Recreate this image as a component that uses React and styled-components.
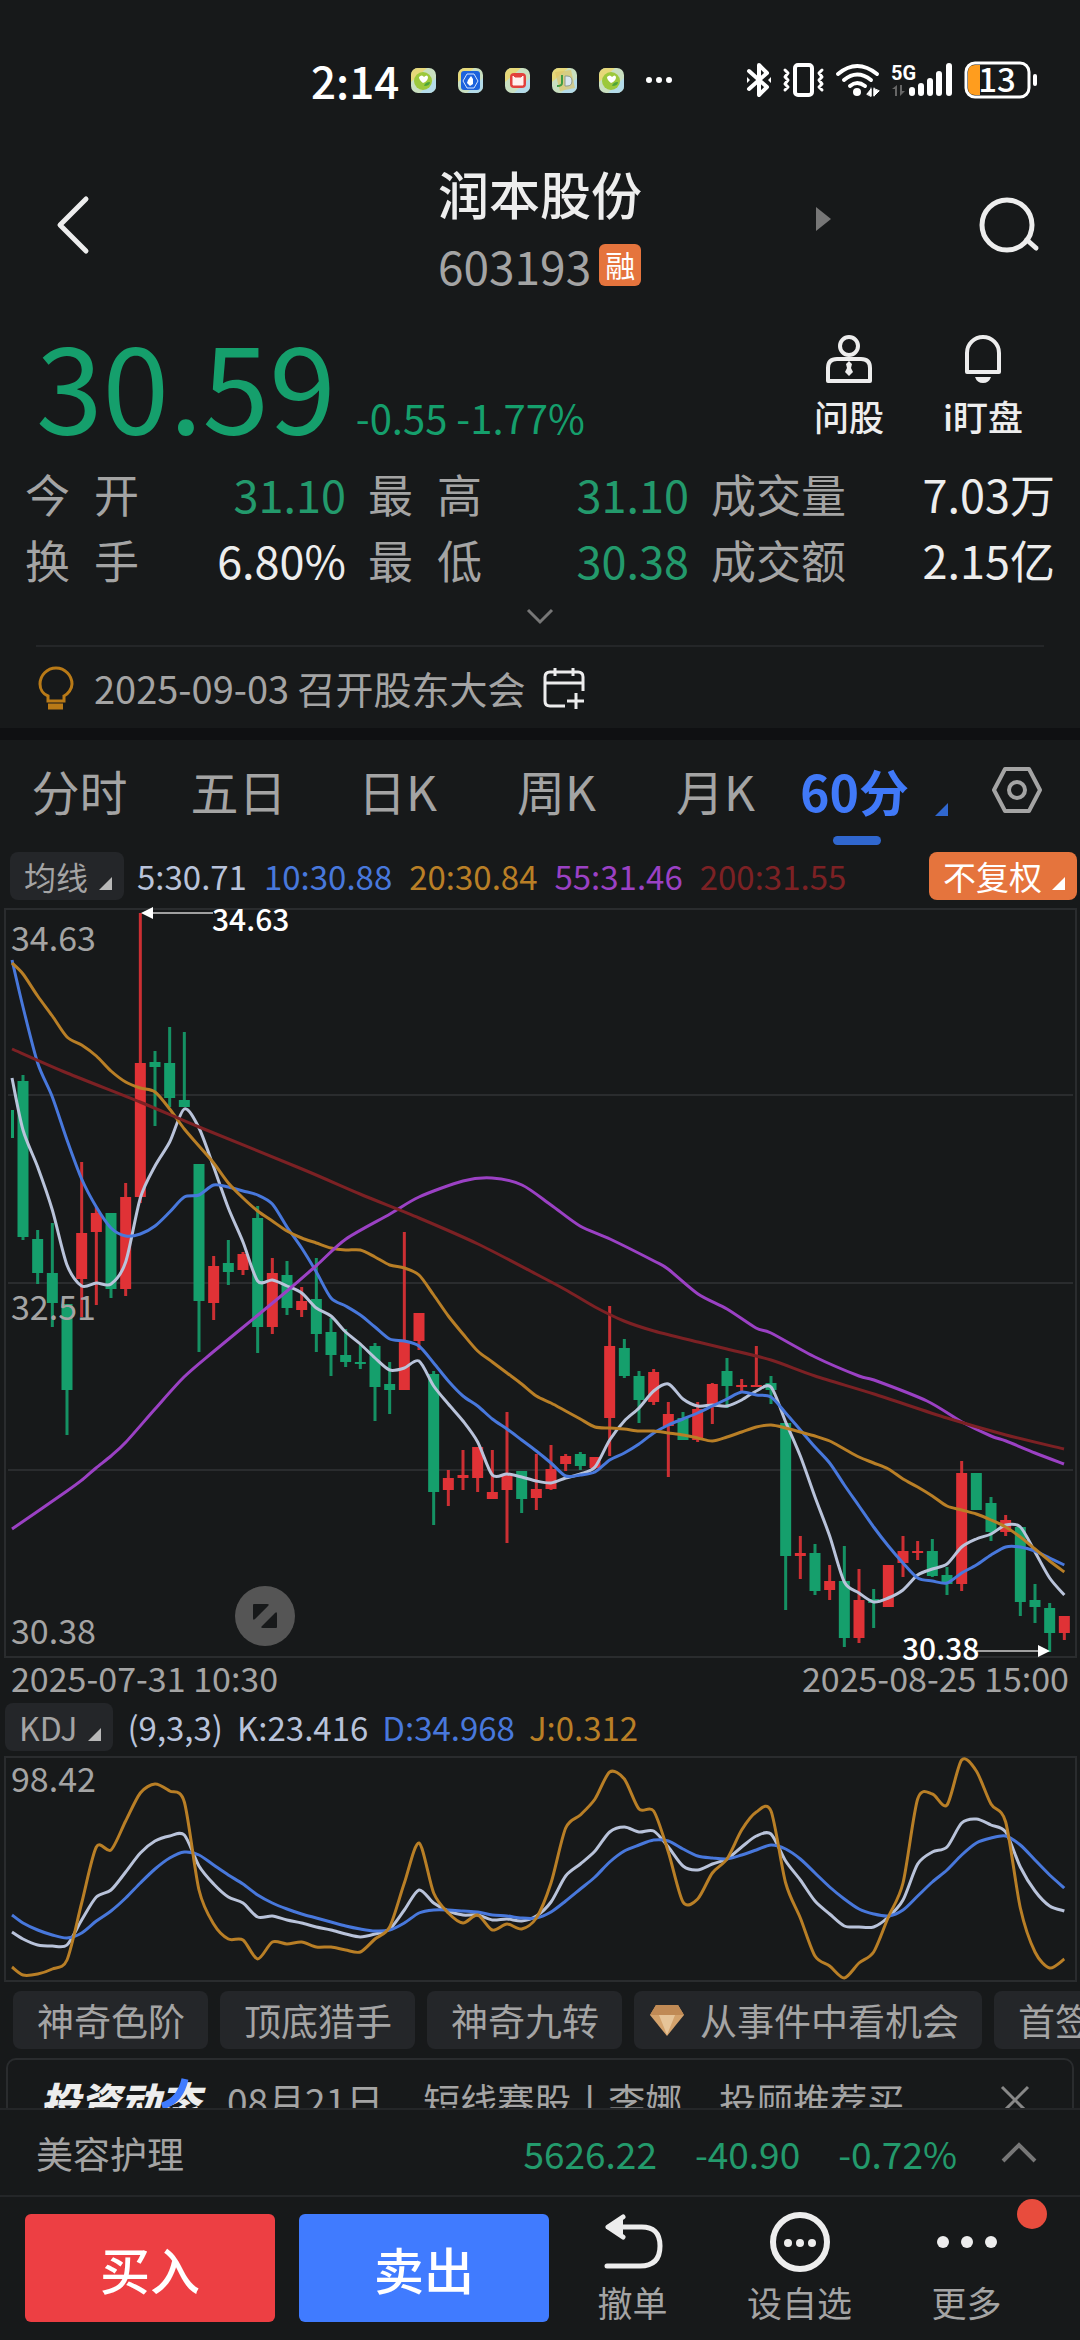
import React from 'react';
import styled, { createGlobalStyle } from 'styled-components';

const RED = '#e03236';
const GREEN = '#159f6c';
const LINE_COLORS = {
  white: '#b9c3da',
  blue: '#4878dc',
  orange: '#b97f26',
  purple: '#9b41c4',
  darkRed: '#7c2124',
};

const GlobalStyle = createGlobalStyle`
  * {
    box-sizing: border-box;
  }
  body {
    margin: 0;
    background: #17191a;
    color: #ededed;
    font-family: "Noto Sans CJK SC", "Noto Sans", sans-serif;
  }
  button {
    margin: 0;
    padding: 0;
    border: 0;
    background: none;
    color: inherit;
    font: inherit;
  }
  svg {
    display: block;
    flex: none;
    overflow: visible;
  }
`;

const Page = styled.div`
  overflow: hidden;
  white-space: nowrap;
`;

/* status bar */

const StatusBar = styled.div`
  display: flex;
  align-items: center;
  justify-content: space-between;
  height: 120px;
  padding: 40px 42px 0 311px;
  color: #fff;
`;

const StatusGroup = styled.div`
  display: flex;
  align-items: center;
  gap: ${(props) => props.$gap}px;
`;

const Clock = styled.span`
  margin-right: -10px;
  font-size: 44px;
  font-weight: 500;
  line-height: 48px;
`;

/* header */

const Header = styled.header`
  display: grid;
  grid-template-columns: 1fr auto 1fr;
  padding: 37px 0 9px;
`;

const HeaderSide = styled.div`
  display: flex;
  align-items: center;
  justify-content: ${(props) => (props.$right ? 'space-between' : 'flex-start')};
  padding: ${(props) => (props.$right ? '0 40px 8px 174px' : '0 0 8px 55px')};
`;

const Title = styled.h1`
  margin: 0;
  font-size: 51px;
  font-weight: 500;
  line-height: 72px;
`;

const Code = styled.div`
  display: flex;
  align-items: center;
  gap: 8px;
  height: 72px;
  font-size: 46px;
  color: #a4a4a4;
`;

const Badge = styled.span`
  width: 42px;
  height: 42px;
  border-radius: 6px;
  background: #e5743d;
  color: #fff;
  font-size: 30px;
  line-height: 40px;
  text-align: center;
`;

/* quote */

const Quote = styled.section`
  display: flex;
  justify-content: space-between;
  height: 151px;
  padding: 12px 30px 0 36px;
`;

const Price = styled.div`
  display: flex;
  align-items: baseline;
  gap: 20px;
  color: ${GREEN};
  font-size: 40px;
  line-height: 48px;

  strong {
    font-size: 120px;
    font-weight: 400;
    line-height: 120px;
  }
`;

const Tools = styled.div`
  display: flex;
  padding-top: 13px;
`;

const Tool = styled.button`
  display: flex;
  flex-direction: column;
  align-items: center;
  gap: 11px;
  width: 134px;
  font-size: 35px;
  font-weight: 500;
  line-height: 44px;
`;

const Stats = styled.dl`
  display: grid;
  grid-template-columns: 14fr 14fr 15fr;
  column-gap: 22px;
  margin: 0;
  padding: 0 25px;
`;

const Stat = styled.div`
  display: flex;
  justify-content: space-between;
  font-size: 45px;
  line-height: 66px;

  dt {
    display: flex;
    justify-content: space-between;
    min-width: 114px;
    color: #a4a4a4;
  }
  dd {
    margin: 0;
    color: ${(props) => (props.$down ? '#239a6c' : '#ededed')};
  }
`;

const Expand = styled.button`
  display: flex;
  align-items: center;
  justify-content: center;
  width: 100%;
  height: 48px;
`;

const Event = styled.div`
  display: flex;
  align-items: center;
  height: 83px;
  margin: 4px 36px 0;
  border-top: 2px solid #242628;
  color: #a4a4a4;
  font-size: 38px;

  span {
    margin: 0 17px 0 20px;
  }
`;

const Band = styled.div`
  height: 12px;
  background: #0f1012;
`;

/* period tabs */

const Tabs = styled.nav`
  display: grid;
  grid-template-columns: repeat(6, 159fr) 126fr;
`;

const Tab = styled.button`
  position: relative;
  height: 105px;
  padding-bottom: 5px;
  color: ${(props) => (props.$active ? '#4079f8' : '#a4a4a4')};
  font-size: ${(props) => (props.$active ? 50 : 48)}px;
  font-weight: ${(props) => (props.$active ? 700 : 400)};
`;

const ActiveTab = styled(Tab)`
  display: flex;
  align-items: center;
  gap: 26px;
  padding-left: 5px;

  svg {
    margin-top: 38px;
  }
  &::after {
    content: '';
    position: absolute;
    bottom: 0;
    left: 38px;
    width: 48px;
    height: 9px;
    border-radius: 5px;
    background: #3067cf;
  }
`;

const SettingsTab = styled(Tab)`
  display: flex;
  align-items: center;
  padding-left: 37px;
`;

/* indicators */

const IndicatorRow = styled.div`
  display: flex;
  align-items: center;
  gap: ${(props) => props.$gap}px;
  height: 48px;
  margin-top: ${(props) => props.$top}px;
  padding: 0 3px 0 ${(props) => props.$left}px;
  font-size: 33px;
`;

const Selector = styled.button`
  display: flex;
  align-items: center;
  gap: 11px;
  height: 48px;
  margin-right: ${(props) => (props.$tight ? -4 : 0)}px;
  padding: 0 12px 0 14px;
  border-radius: 8px;
  background: #242629;
  color: #a4a4a4;
  font-size: 32px;

  svg {
    margin-top: 14px;
  }
`;

const AdjustButton = styled(Selector)`
  gap: 10px;
  margin: 0 0 0 auto;
  background: #e5743d;
  color: #fff;
  font-size: 33px;
`;

const Reading = styled.span`
  color: ${(props) => props.$color};
`;

const ChartBox = styled.div`
  position: relative;

  > svg {
    width: 100%;
    height: auto;
  }
  text {
    font-size: 34px;
    fill: #a4a4a4;
  }
  .mark {
    font-size: 30px;
    font-weight: 500;
    fill: #fff;
  }
`;

const FullscreenButton = styled.button`
  position: absolute;
  left: 235px;
  bottom: 12px;
  width: 60px;
  height: 60px;
  display: grid;
  place-items: center;
  border-radius: 50%;
  background: #555;
`;

const Dates = styled.div`
  display: flex;
  justify-content: space-between;
  padding: 0 11px;
  color: #a4a4a4;
  font-size: 34px;
  line-height: 40px;
`;

/* chips and news */

const Chips = styled.div`
  display: flex;
  gap: 12px;
  margin-top: 9px;
  padding-left: 13px;
`;

const Chip = styled.button`
  display: flex;
  align-items: center;
  flex: none;
  gap: 16px;
  height: 58px;
  padding: 0 23px 0 ${(props) => (props.$icon ? 16 : 24)}px;
  border-radius: 8px;
  background: #242629;
  color: #a4a4a4;
  font-size: 37px;
`;

/* the card slides under the index bar */
const NewsPeek = styled.div`
  height: 50px;
  margin-top: 9px;
  padding: 0 6px;
  overflow: hidden;
`;

const NewsCard = styled.div`
  display: flex;
  align-items: center;
  height: 84px;
  padding: 0 42px 0 32px;
  border: 2px solid #2a2c2e;
  border-radius: 10px;
  color: #a4a4a4;
  font-size: 37px;
`;

const NewsLogo = styled.strong`
  position: relative;
  margin-right: 27px;
  color: #ededed;
  font-size: 40px;
  font-style: italic;
  font-weight: 900;

  svg {
    position: absolute;
    right: 12px;
    top: 8px;
  }
`;

const NewsDate = styled.span`
  margin-right: 40px;
`;

const Close = styled.button`
  margin-left: auto;
`;

const IndexBar = styled.div`
  display: flex;
  align-items: center;
  gap: 38px;
  height: 87px;
  padding: 0 43px 0 36px;
  border-top: 2px solid #242628;
  color: #239a6c;
  font-size: 37px;
`;

const IndexName = styled.span`
  margin-right: auto;
  color: #a4a4a4;
`;

const IndexToggle = styled.button`
  margin-left: 6px;
`;

/* trade bar */

const TradeBar = styled.footer`
  display: flex;
  height: 145px;
  padding: 17px 30px 18px 25px;
  border-top: 2px solid #242628;
`;

const TradeButton = styled.button`
  flex: 250 1 0;
  height: 108px;
  margin-right: ${(props) => (props.$side === 'buy' ? 24 : 0)}px;
  border-radius: 6px;
  background: ${(props) => (props.$side === 'buy' ? '#ed3f43' : '#407bff')};
  color: #fff;
  font-size: 50px;
  font-weight: 500;
`;

const Action = styled.button`
  position: relative;
  flex: 167 1 0;
  display: flex;
  flex-direction: column;
  align-items: center;
  justify-content: flex-end;
  color: #a4a4a4;
  font-size: 35px;
  line-height: 40px;

  svg {
    margin-bottom: 10px;
  }
`;

const Dot = styled.i`
  position: absolute;
  right: 3px;
  top: -15px;
  width: 30px;
  height: 30px;
  border-radius: 50%;
  background: #e84c3d;
`;

/* data: [high, bodyTop, bodyBottom, low, up] in chart units */

const CANDLES = [
  [175, 181, 337, 340, 0], [330, 339, 373, 384, 0], [323, 373, 403, 427, 0], [404, 404, 490, 535, 0],
  [262, 333, 379, 417, 1], [307, 313, 332, 405, 1], [313, 313, 389, 398, 0], [283, 297, 389, 396, 1],
  [13, 163, 297, 303, 1], [151, 162, 167, 226, 0], [127, 163, 198, 207, 0], [132, 200, 207, 207, 0],
  [264, 264, 401, 452, 0], [356, 366, 403, 420, 1], [340, 363, 372, 385, 0], [352, 354, 370, 375, 1],
  [306, 318, 427, 453, 0], [358, 373, 427, 434, 1], [361, 375, 408, 415, 0], [387, 401, 410, 417, 1],
  [358, 399, 434, 452, 0], [418, 432, 455, 476, 0], [429, 455, 462, 467, 0], [445, 462, 464, 469, 0],
  [443, 446, 487, 521, 0], [462, 484, 490, 514, 0], [332, 442, 490, 490, 1], [413, 413, 441, 450, 1],
  [471, 474, 592, 625, 0], [570, 578, 590, 606, 1], [550, 575, 578, 590, 1], [547, 547, 578, 592, 1],
  [550, 592, 599, 599, 1], [512, 574, 590, 643, 1], [571, 571, 599, 613, 0], [554, 589, 598, 610, 1],
  [545, 569, 589, 590, 1], [554, 556, 564, 571, 1], [552, 554, 566, 570, 0], [557, 557, 568, 569, 1],
  [406, 446, 518, 556, 1], [439, 448, 476, 478, 0], [471, 476, 500, 523, 0], [469, 472, 502, 505, 1],
  [502, 514, 526, 577, 1], [512, 518, 540, 540, 0], [502, 509, 540, 542, 1], [483, 484, 506, 524, 1],
  [458, 471, 486, 508, 0], [479, 485, 487, 491, 1], [446, 485, 487, 487, 1], [476, 483, 490, 504, 0],
  [523, 523, 656, 710, 0], [636, 653, 656, 679, 1], [644, 653, 691, 695, 0], [665, 681, 690, 700, 1],
  [646, 681, 738, 747, 0], [669, 700, 738, 743, 1], [689, 699, 703, 728, 0], [665, 665, 707, 707, 1],
  [636, 651, 663, 677, 1], [641, 651, 653, 660, 1], [639, 651, 676, 677, 0], [667, 675, 684, 695, 0],
  [561, 573, 684, 691, 1], [573, 573, 610, 610, 0], [597, 603, 632, 641, 0], [615, 620, 632, 636, 1],
  [627, 627, 702, 716, 0], [684, 700, 707, 723, 0], [703, 708, 733, 752, 0], [716, 716, 733, 740, 1],
];

const MA5 = [
  178, 230, 267, 310, 365, 386, 383, 384, 362, 298, 266, 242, 209, 228, 267, 308, 342, 381, 380, 386, 393, 408,
  416, 432, 444, 458, 470, 468, 461, 486, 504, 521, 542, 575, 574, 577, 581, 583, 578, 574, 567, 540, 521, 508,
  491, 484, 499, 506, 505, 506, 500, 491, 487, 522, 556, 597, 636, 682, 693, 702, 698, 690, 675, 669, 664, 647,
  639, 634, 625, 627, 652, 678, 695,
];

const MA10 = [
  60, 107, 163, 197, 240, 279, 307, 328, 336, 334, 326, 312, 297, 295, 285, 287, 291, 295, 304, 327, 348, 372,
  398, 406, 415, 427, 439, 441, 446, 463, 481, 496, 506, 519, 529, 540, 551, 563, 576, 575, 572, 560, 553, 544,
  533, 525, 519, 513, 506, 499, 492, 495, 497, 513, 530, 547, 563, 585, 606, 627, 646, 663, 678, 681, 683, 673,
  665, 655, 647, 647, 651, 658, 665,
];

const MA20 = [
  63, 74, 96, 116, 137, 145, 156, 171, 182, 188, 192, 209, 229, 246, 263, 283, 298, 311, 321, 331, 338, 343,
  348, 350, 350, 357, 365, 368, 375, 395, 416, 434, 451, 462, 473, 484, 496, 503, 511, 519, 527, 528, 529, 531,
  531, 533, 535, 538, 541, 537, 532, 527, 525, 528, 532, 536, 541, 549, 557, 563, 569, 579, 587, 596, 606, 610,
  614, 620, 627, 637, 649, 661, 672,
];

const MA55 = [
  [12, 629], [67, 591], [82, 580], [96, 568], [111, 556], [126, 542], [155, 509], [184, 477], [213, 452],
  [258, 415], [287, 391], [317, 365], [346, 339], [390, 314], [419, 297], [463, 281], [492, 278], [522, 285],
  [551, 305], [580, 326], [610, 339], [654, 361], [668, 369], [698, 394], [727, 409], [756, 428], [771, 433],
  [815, 457], [859, 476], [874, 480], [927, 501], [962, 522], [991, 536], [1006, 541], [1035, 553], [1064, 564],
];

const MA200 = [
  [12, 149], [67, 173], [140, 202], [199, 227], [302, 269], [360, 294], [419, 318], [478, 344], [536, 374],
  [566, 390], [595, 407], [624, 421], [654, 431], [698, 442], [727, 449], [771, 460], [815, 476], [874, 494],
  [947, 518], [1006, 535], [1064, 549],
];

const K_LINE = [
  182, 189, 195, 196, 195, 170, 147, 140, 122, 103, 91, 86, 85, 116, 134, 147, 153, 167, 166, 170, 173, 177,
  180, 184, 187, 184, 179, 160, 140, 153, 161, 165, 165, 170, 169, 171, 166, 152, 126, 114, 101, 82, 77, 82,
  81, 97, 116, 120, 114, 109, 97, 86, 84, 111, 130, 151, 164, 176, 177, 177, 167, 150, 114, 102, 97, 73, 69,
  75, 82, 117, 141, 156, 161,
];

const D_LINE = [
  165, 173, 180, 185, 188, 183, 171, 161, 148, 133, 119, 108, 102, 105, 115, 125, 134, 145, 153, 159, 164, 168,
  172, 176, 179, 181, 180, 173, 163, 160, 160, 161, 162, 165, 166, 168, 168, 162, 151, 139, 127, 112, 101, 95,
  90, 91, 99, 106, 108, 109, 105, 100, 95, 99, 109, 123, 137, 149, 159, 164, 166, 160, 146, 132, 120, 105, 93,
  88, 86, 95, 110, 125, 138,
];

const J_LINE = [
  217, 225, 224, 219, 210, 153, 97, 100, 71, 43, 34, 41, 52, 140, 174, 189, 190, 209, 192, 194, 192, 197, 197,
  200, 202, 189, 177, 133, 93, 143, 163, 173, 165, 180, 174, 179, 168, 133, 78, 65, 49, 22, 29, 59, 61, 102,
  152, 149, 123, 109, 80, 62, 61, 133, 168, 206, 216, 228, 213, 202, 167, 133, 49, 44, 55, 10, 21, 54, 72, 158,
  202, 218, 209,
];

const STATS = [
  { label: '今开', value: '31.10', down: true },
  { label: '最高', value: '31.10', down: true },
  { label: '成交量', value: '7.03万' },
  { label: '换手', value: '6.80%' },
  { label: '最低', value: '30.38', down: true },
  { label: '成交额', value: '2.15亿' },
];

const AVERAGES = [
  ['5:30.71', LINE_COLORS.white],
  ['10:30.88', LINE_COLORS.blue],
  ['20:30.84', LINE_COLORS.orange],
  ['55:31.46', LINE_COLORS.purple],
  ['200:31.55', LINE_COLORS.darkRed],
];

const candleX = (i) => 23 + (i * 44) / 3;

// the first value belongs to the left edge of the plot
const toPoints = (values) => values.map((y, i) => [i === 0 ? 12 : candleX(i - 1), y]);

const smoothPath = (points) => {
  const t = 0.14;
  return points.reduce((d, [x, y], i) => {
    if (i === 0) return `M${x} ${y}`;
    const [x1, y1] = points[i - 1];
    const [x0, y0] = points[i - 2] || points[i - 1];
    const [x3, y3] = points[i + 1] || points[i];
    const c1 = [x1 + (x - x0) * t, y1 + (y - y0) * t];
    const c2 = [x - (x3 - x1) * t, y - (y3 - y1) * t];
    return `${d}C${c1.join(' ')} ${c2.join(' ')} ${x} ${y}`;
  }, '');
};

const Line = ({ points, color }) => (
  <path d={smoothPath(points)} fill="none" stroke={color} strokeWidth="3" strokeLinejoin="round" />
);

const Corner = ({ color = '#b8b8b8' }) => (
  <svg width="13" height="13" viewBox="0 0 13 13"><path d="M13 0v13H0z" fill={color} /></svg>
);

const PriceChart = () => (
  <svg viewBox="0 0 1080 758" role="img" aria-label="60分K线图">
    <g fill="none" stroke="#2a2c2e" strokeWidth="2">
      <rect x="5" y="9" width="1071" height="748" />
      <path d="M8 195H1073M8 383H1073M8 570H1073" />
    </g>
    <rect x="11" y="210" width="3" height="28" fill={GREEN} />
    {CANDLES.map(([high, top, bottom, low, up], i) => (
      <g key={candleX(i)} fill={up ? RED : GREEN}>
        <rect x={candleX(i) - 1.5} y={high} width="3" height={low - high} opacity="0.9" />
        <rect x={candleX(i) - 5.5} y={top} width="11" height={bottom - top} />
      </g>
    ))}
    <Line points={toPoints(MA5)} color={LINE_COLORS.white} />
    <Line points={toPoints(MA10)} color={LINE_COLORS.blue} />
    <Line points={toPoints(MA20)} color={LINE_COLORS.orange} />
    <Line points={MA55} color={LINE_COLORS.purple} />
    <Line points={MA200} color={LINE_COLORS.darkRed} />
    <text x="11" y="51">34.63</text>
    <text x="11" y="420">32.51</text>
    <text x="11" y="744">30.38</text>
    <path d="M152 13H213M977 751H1040" stroke="#a0a0a0" strokeWidth="2" />
    <path d="M141 13l12-6v12zM1050 751l-12-6v12z" fill="#fff" />
    <text className="mark" x="212" y="31">34.63</text>
    <text className="mark" x="902" y="760">30.38</text>
  </svg>
);

const KdjChart = () => (
  <svg viewBox="0 1 1080 231" role="img" aria-label="KDJ">
    <rect x="5" y="7" width="1071" height="224" fill="none" stroke="#2a2c2e" strokeWidth="2" />
    <Line points={toPoints(K_LINE)} color={LINE_COLORS.white} />
    <Line points={toPoints(D_LINE)} color={LINE_COLORS.blue} />
    <Line points={toPoints(J_LINE)} color={LINE_COLORS.orange} />
    <text x="11" y="42">98.42</text>
  </svg>
);

/* launcher icons of the pending notifications */
const AppIcon = ({ kind }) => (
  <svg width="25" height="25" viewBox="0 0 25 25">
    <rect width="25" height="25" rx="7" fill="#c9dfc0" />
    <path d="M0 14V7a7 7 0 0 1 7-7h9z" fill="#e6d879" />
    <path d="M25 10v8a7 7 0 0 1-7 7H9z" fill="#b4dbe9" />
    {kind === 'leaf' && (
      <>
        <circle cx="12" cy="13" r="9" fill="#9cc83c" />
        <path d="M8 9q3-3 5 0 3-3 4 0 0 4-5 6-4-3-4-6z" fill="#fff" />
        <path d="M13 18q1-4 6-4 0 4-6 4z" fill="#4ca53a" />
      </>
    )}
    {kind === 'hand' && (
      <>
        <rect x="3" y="3" width="19" height="19" rx="3" fill="#1d62dd" />
        <path d="M9 6h7l4 7-4 7H9l-4-7z" fill="none" stroke="#d5e4ff" strokeWidth="1" />
        <path d="M10 12l3-4 2 3v5l-3 2-3-3z" fill="#fff" />
      </>
    )}
    {kind === 'red' && (
      <>
        <rect x="5" y="5" width="16" height="15" rx="4" fill="#e2403c" />
        <path d="M8 8l2 2h6l2-2v9H8z" fill="#fff0ee" stroke="#fff0ee" strokeLinejoin="round" />
      </>
    )}
    {kind === 'jd' && (
      <>
        <path d="M3 4l16-2 4 18-15 3z" fill="#dcc56a" opacity="0.7" />
        <path d="M10 7v8q0 3-5 3" fill="none" stroke="#3f9c44" strokeWidth="2" />
        <path d="M13 8h2q5 0 5 5t-5 5h-2z" fill="#d9e6ef" stroke="#8d9a8e" strokeWidth="1" />
      </>
    )}
  </svg>
);

const Status = () => (
  <StatusBar>
    <StatusGroup $gap={22}>
      <Clock>2:14</Clock>
      <AppIcon kind="leaf" />
      <AppIcon kind="hand" />
      <AppIcon kind="red" />
      <AppIcon kind="jd" />
      <AppIcon kind="leaf" />
      <svg width="26" height="8" viewBox="0 0 26 8" fill="#fff">
        <circle cx="3" cy="4" r="3" /><circle cx="13" cy="4" r="3" /><circle cx="23" cy="4" r="3" />
      </svg>
    </StatusGroup>
    <StatusGroup $gap={10}>
      <svg width="26" height="34" viewBox="0 0 26 34" fill="none" stroke="#fff" strokeWidth="4" strokeLinejoin="round" strokeLinecap="round">
        <path d="M3 8l18 16-8 8V2l8 8L3 26" />
        <path d="M1 14l3 3-3 3zM25 14l-3 3 3 3z" fill="#fff" stroke="none" />
      </svg>
      <svg width="43" height="34" viewBox="0 0 43 34" fill="none" stroke="#fff" strokeLinejoin="round" strokeLinecap="round">
        <rect x="13" y="2" width="17" height="30" rx="3" strokeWidth="4" />
        <path d="M3 7l3 3-3 4 3 3-3 4 3 3-3 3M40 7l-3 3 3 4-3 3 3 4-3 3 3 3" strokeWidth="3" />
      </svg>
      <svg width="46" height="34" viewBox="0 0 46 34" fill="none" stroke="#fff" strokeWidth="4" strokeLinecap="round">
        <path d="M3 11q19-16 39 0M9 17q13-11 27 0M15 23q7-6 15 0" />
        <circle cx="22" cy="29" r="4" fill="#fff" stroke="none" />
        <path d="M32 31l4-5v7zM39 26v7l5-5zM36 25v8M39 25v8" fill="#fff" stroke="#fff" strokeWidth="1" />
      </svg>
      <svg width="63" height="34" viewBox="0 0 63 34">
        <text x="0" y="17" fill="#fff" fontSize="20" fontWeight="700" fontFamily="Roboto">5G</text>
        <path d="M1 26l5-4v11H4v-7zM9 22v11l5-5h-3v-6z" fill="#666" />
        <path d="M21 27v3M30 23v7M39 18v12M48 11v19M58 3v27" stroke="#fff" strokeWidth="6" strokeLinecap="round" />
      </svg>
      <svg width="74" height="38" viewBox="0 0 74 38">
        <path d="M4 11q0-7 7-7h5v30h-5q-7 0-7-7z" fill="#ff9d1e" />
        <rect x="2" y="2" width="63" height="34" rx="9" fill="none" stroke="#fff" strokeWidth="3" />
        <rect x="69" y="13" width="4" height="12" rx="2" fill="#fff" />
        <text x="33" y="31" fill="#fff" fontSize="33" fontWeight="500" textAnchor="middle">13</text>
      </svg>
    </StatusGroup>
  </StatusBar>
);

const App = () => (
  <Page>
    <GlobalStyle />
    <Status />

    <Header>
      <HeaderSide>
        <button type="button" aria-label="返回">
          <svg width="36" height="60" viewBox="0 0 36 60" fill="none" stroke="#ededed" strokeWidth="5" strokeLinecap="round" strokeLinejoin="round">
            <path d="M31 4L5 30l26 26" />
          </svg>
        </button>
      </HeaderSide>
      <div>
        <Title>润本股份</Title>
        <Code>603193<Badge>融</Badge></Code>
      </div>
      <HeaderSide $right>
        <button type="button" aria-label="下一只">
          <svg width="16" height="36" viewBox="0 0 16 36"><path d="M0 0l15 12L0 24z" fill="#777" /></svg>
        </button>
        <button type="button" aria-label="搜索">
          <svg width="62" height="56" viewBox="0 0 62 56" fill="none" stroke="#ededed" strokeWidth="5" strokeLinecap="round">
            <circle cx="29" cy="28" r="25" />
            <path d="M49 43l9 8" />
          </svg>
        </button>
      </HeaderSide>
    </Header>

    <Quote>
      <Price>
        <strong>30.59</strong>
        <span>-0.55 -1.77%</span>
      </Price>
      <Tools>
        <Tool type="button">
          <svg width="48" height="48" viewBox="0 0 48 48" fill="none" stroke="#ededed" strokeWidth="4" strokeLinejoin="round">
            <circle cx="24" cy="11" r="9" />
            <path d="M3 46V33q0-9 9-9h24q9 0 9 9v13z" />
            <path d="M24 26l3 3-1 4 2 4-4 4-4-4 2-4-1-4z" fill="#ededed" stroke="none" />
          </svg>
          问股
        </Tool>
        <Tool type="button">
          <svg width="40" height="48" viewBox="0 0 40 48" fill="none" stroke="#ededed" strokeWidth="4" strokeLinejoin="round">
            <path d="M4 37V18a16 16 0 0 1 32 0v19z" />
            <path d="M12 42h16q-2 6-8 6t-8-6z" fill="#ededed" stroke="none" />
          </svg>
          i盯盘
        </Tool>
      </Tools>
    </Quote>

    <Stats>
      {STATS.map(({ label, value, down }) => (
        <Stat key={label} $down={down}>
          <dt>{label.length === 2 ? [...label].map((c) => <span key={c}>{c}</span>) : label}</dt>
          <dd>{value}</dd>
        </Stat>
      ))}
    </Stats>
    <Expand type="button" aria-label="展开">
      <svg width="28" height="16" viewBox="0 0 28 16" fill="none" stroke="#777" strokeWidth="3"><path d="M2 1l12 12L26 1" /></svg>
    </Expand>
    <Event>
      <svg width="38" height="44" viewBox="0 0 38 44" fill="none" stroke="#b97a17" strokeWidth="3">
        <path d="M12 35v-5C7 28 4 23 4 18a16 16 0 0 1 32 0c0 5-4 10-8 12v5zM12 39h15M12 42h15" />
      </svg>
      <span>2025-09-03 召开股东大会</span>
      <svg width="42" height="42" viewBox="0 0 42 42" fill="none" stroke="#ededed" strokeWidth="3">
        <path d="M22 39H7q-5 0-5-5V10q0-5 5-5h28q5 0 5 5v14M2 16h38M12 1v8M30 1v8M24 34h17M33 26v16" />
      </svg>
    </Event>
    <Band />

    <Tabs>
      <Tab type="button">分时</Tab>
      <Tab type="button">五日</Tab>
      <Tab type="button">日K</Tab>
      <Tab type="button">周K</Tab>
      <Tab type="button">月K</Tab>
      <ActiveTab type="button" $active>60分<Corner color="#3067cf" /></ActiveTab>
      <SettingsTab type="button" aria-label="设置">
        <svg width="52" height="48" viewBox="0 0 52 48" fill="none" stroke="#a4a4a4" strokeWidth="4" strokeLinejoin="round">
          <path d="M14 3h24l11 21-11 21H14L3 24z" />
          <circle cx="26" cy="24" r="8" />
        </svg>
      </SettingsTab>
    </Tabs>

    <IndicatorRow $top={7} $left={10} $gap={17}>
      <Selector type="button" $tight>均线<Corner /></Selector>
      {AVERAGES.map(([text, color]) => <Reading key={text} $color={color}>{text}</Reading>)}
      <AdjustButton type="button">不复权<Corner color="#fff" /></AdjustButton>
    </IndicatorRow>
    <ChartBox>
      <PriceChart />
      <FullscreenButton type="button" aria-label="全屏">
        <svg width="24" height="24" viewBox="0 0 24 24" fill="#17191a">
          <path d="M0 1q0-1 1-1h13q3 0 1 2L2 15q-2 2-2-1zM24 23q0 1-1 1H10q-3 0-1-2L22 9q2-2 2 1z" />
        </svg>
      </FullscreenButton>
    </ChartBox>
    <Dates>
      <span>2025-07-31 10:30</span>
      <span>2025-08-25 15:00</span>
    </Dates>

    <IndicatorRow $top={5} $left={5} $gap={14}>
      <Selector type="button">KDJ<Corner /></Selector>
      <Reading $color={LINE_COLORS.white}>(9,3,3)</Reading>
      <Reading $color={LINE_COLORS.white}>K:23.416</Reading>
      <Reading $color={LINE_COLORS.blue}>D:34.968</Reading>
      <Reading $color={LINE_COLORS.orange}>J:0.312</Reading>
    </IndicatorRow>
    <ChartBox>
      <KdjChart />
    </ChartBox>

    <Chips>
      <Chip type="button">神奇色阶</Chip>
      <Chip type="button">顶底猎手</Chip>
      <Chip type="button">神奇九转</Chip>
      <Chip type="button" $icon>
        <svg width="34" height="32" viewBox="0 0 34 32">
          <path d="M6 1h22l6 10-17 21L0 11z" fill="#d3a26c" />
          <path d="M6 1h22l6 10H0z" fill="#c08a55" />
          <path d="M9 11h16l-8 20z" fill="#e6c498" />
        </svg>
        从事件中看机会
      </Chip>
      <Chip type="button">首签</Chip>
    </Chips>

    <NewsPeek>
      <NewsCard>
        <NewsLogo>
          投资动态
          <svg width="28" height="34" viewBox="0 0 28 34" fill="none" stroke="#407bff" strokeWidth="7">
            <path d="M25 0Q20 22 2 27" />
          </svg>
        </NewsLogo>
        <NewsDate>08月21日</NewsDate>
        <span>短线赛股丨李娜　投顾推荐买</span>
        <Close type="button" aria-label="关闭">
          <svg width="30" height="30" viewBox="0 0 30 30" fill="none" stroke="#888" strokeWidth="3"><path d="M2 2l26 26M28 2L2 28" /></svg>
        </Close>
      </NewsCard>
    </NewsPeek>

    <IndexBar>
      <IndexName>美容护理</IndexName>
      <span>5626.22</span>
      <span>-40.90</span>
      <span>-0.72%</span>
      <IndexToggle type="button" aria-label="展开指数">
        <svg width="36" height="22" viewBox="0 0 36 22" fill="none" stroke="#777" strokeWidth="4"><path d="M2 19L18 3l16 16" /></svg>
      </IndexToggle>
    </IndexBar>

    <TradeBar>
      <TradeButton type="button" $side="buy">买入</TradeButton>
      <TradeButton type="button" $side="sell">卖出</TradeButton>
      <Action type="button">
        <svg width="60" height="60" viewBox="0 0 60 60" fill="none" stroke="#ededed" strokeWidth="5" strokeLinecap="round" strokeLinejoin="round">
          <path d="M4 54h33q20 0 20-20T37 15H6" />
          <path d="M20 4L3 15l17 11z" fill="#ededed" stroke="none" />
          <path d="M20 5L5 15l15 10" />
        </svg>
        撤单
      </Action>
      <Action type="button">
        <svg width="60" height="60" viewBox="0 0 60 60" fill="#ededed">
          <circle cx="30" cy="30" r="27" fill="none" stroke="#ededed" strokeWidth="6" />
          <circle cx="18" cy="31" r="4" /><circle cx="30" cy="31" r="4" /><circle cx="42" cy="31" r="4" />
        </svg>
        设自选
      </Action>
      <Action type="button">
        <Dot />
        <svg width="60" height="60" viewBox="0 0 60 60" fill="#ededed">
          <circle cx="6" cy="30" r="6" /><circle cx="30" cy="30" r="6" /><circle cx="54" cy="30" r="6" />
        </svg>
        更多
      </Action>
    </TradeBar>
  </Page>
);

export default App;
